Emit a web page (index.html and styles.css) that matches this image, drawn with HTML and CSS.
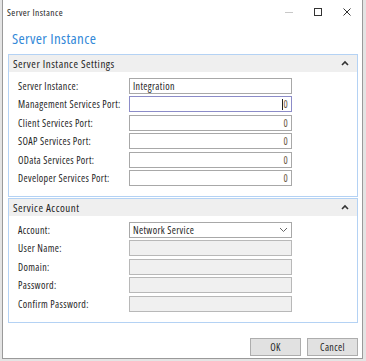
FILE: index.html
```html
<!DOCTYPE html>
<html lang="en">
<head>
    <meta charset="UTF-8">
    <link rel="stylesheet" href="styles.css">
</head>
<body>
    <div class="window">
        <div class="titlebar">
            <span class="title">Server Instance</span>
            <div class="win-controls">
                <svg class="ctl ctl-min" width="10" height="10"><line x1="1" y1="5.5" x2="9" y2="5.5" stroke="#c8c8c8" stroke-width="1"/></svg>
                <svg class="ctl" width="10" height="10"><rect x="1.5" y="1.5" width="7" height="7" fill="none" stroke="#333" stroke-width="1"/></svg>
                <svg class="ctl" width="10" height="10"><path d="M1.5,1.5 L8.5,8.5 M8.5,1.5 L1.5,8.5" stroke="#333" stroke-width="1"/></svg>
            </div>
        </div>

        <div class="heading">Server Instance</div>

        <!-- Paramètres de l'instance -->
        <div class="section">
            <div class="section-head">
                <span>Server Instance Settings</span>
                <svg class="caret" width="8" height="6"><path d="M1,5 L4,2 L7,5" fill="none" stroke="#333" stroke-width="1.6"/></svg>
            </div>
            <div class="rows">
                <div class="row"><label>Server Instance:</label><div class="field">Integration</div></div>
                <div class="row"><label>Management Services Port:</label><div class="field num focus"><span class="cursor"></span>0</div></div>
                <div class="row"><label>Client Services Port:</label><div class="field num">0</div></div>
                <div class="row"><label>SOAP Services Port:</label><div class="field num">0</div></div>
                <div class="row"><label>OData Services Port:</label><div class="field num">0</div></div>
                <div class="row"><label>Developer Services Port:</label><div class="field num">0</div></div>
            </div>
        </div>

        <!-- Compte de service -->
        <div class="section">
            <div class="section-head">
                <span>Service Account</span>
                <svg class="caret" width="8" height="6"><path d="M1,5 L4,2 L7,5" fill="none" stroke="#333" stroke-width="1.6"/></svg>
            </div>
            <div class="rows">
                <div class="row"><label>Account:</label><div class="field select">Network Service
                    <svg class="chev" width="9" height="6"><path d="M1,1 L4.5,4.5 L8,1" fill="none" stroke="#666" stroke-width="1"/></svg></div></div>
                <div class="row"><label>User Name:</label><div class="field disabled"></div></div>
                <div class="row"><label>Domain:</label><div class="field disabled"></div></div>
                <div class="row"><label>Password:</label><div class="field disabled"></div></div>
                <div class="row"><label>Confirm Password:</label><div class="field disabled"></div></div>
            </div>
        </div>

        <div class="footer">
            <button>OK</button>
            <button>Cancel</button>
        </div>
    </div>
</body>
</html>
```

FILE: styles.css
```css
body {
    margin: 0;
    background: #e4e4e4;
    font-family: 'Open Sans', 'Noto Sans', sans-serif;
    font-stretch: condensed;
    letter-spacing: 0.35px;
    color: #1e1e1e;
}

.window {
    margin-left: 2px;
    width: 359px;
    height: 358px;
    background: white;
    border: 1px solid #9a9a9a;
    border-top: none;
    display: flex;
    flex-direction: column;
}

.titlebar {
    height: 25px;
    display: flex;
    align-items: center;
    justify-content: space-between;
    padding-left: 4px;
    font-size: 9.5px;
    letter-spacing: 0.4px;
}

.win-controls {
    display: flex;
    gap: 19px;
    margin-right: 10px;
    margin-top: -1px;
}

.heading {
    color: #3389d8;
    font-size: 15px;
    padding: 3px 0 0 9px;
    height: 26px;
}

.section {
    margin: 0 4px 0 5px;
    border: 1px solid #b4d2f4;
}

.section + .section {
    margin-top: 1px;
}

.section-head {
    background: #efefef;
    height: 17px;
    display: flex;
    align-items: center;
    justify-content: space-between;
    padding: 0 8px 0 4px;
    font-size: 11px;
    letter-spacing: 0.5px;
}

.caret {
    margin-top: -1px;
}

.rows {
    display: flex;
    flex-direction: column;
    gap: 2.4px;
    padding: 6px 0 10px 9px;
}

.row {
    display: flex;
    align-items: center;
    height: 16px;
}

.row label {
    width: 111px;
    font-size: 10px;
    white-space: nowrap;
}

.field {
    box-sizing: border-box;
    width: 163px;
    height: 16px;
    border: 1px solid #a8a8a8;
    background: white;
    font-size: 10px;
    line-height: 14px;
    padding: 0 3px;
    position: relative;
}

.num {
    text-align: right;
    color: #6b5a46;
}

.focus {
    border-color: #8c8cc8;
}

.cursor {
    position: absolute;
    right: 8px;
    top: 2px;
    width: 1px;
    height: 11px;
    background: #222;
}

.select {
    display: flex;
    align-items: center;
    justify-content: space-between;
}

.disabled {
    background: #f0f0f0;
    border-color: #b8b8b8;
}

.footer {
    display: flex;
    justify-content: flex-end;
    gap: 6px;
    padding: 15px 4px 0 0;
}

button {
    width: 51px;
    height: 18px;
    padding: 0;
    background: #e1e1e1;
    border: 1px solid #adadad;
    font-family: 'Open Sans', sans-serif;
    font-stretch: condensed;
    letter-spacing: 0.35px;
    font-size: 10px;
    color: #1e1e1e;
}
```
